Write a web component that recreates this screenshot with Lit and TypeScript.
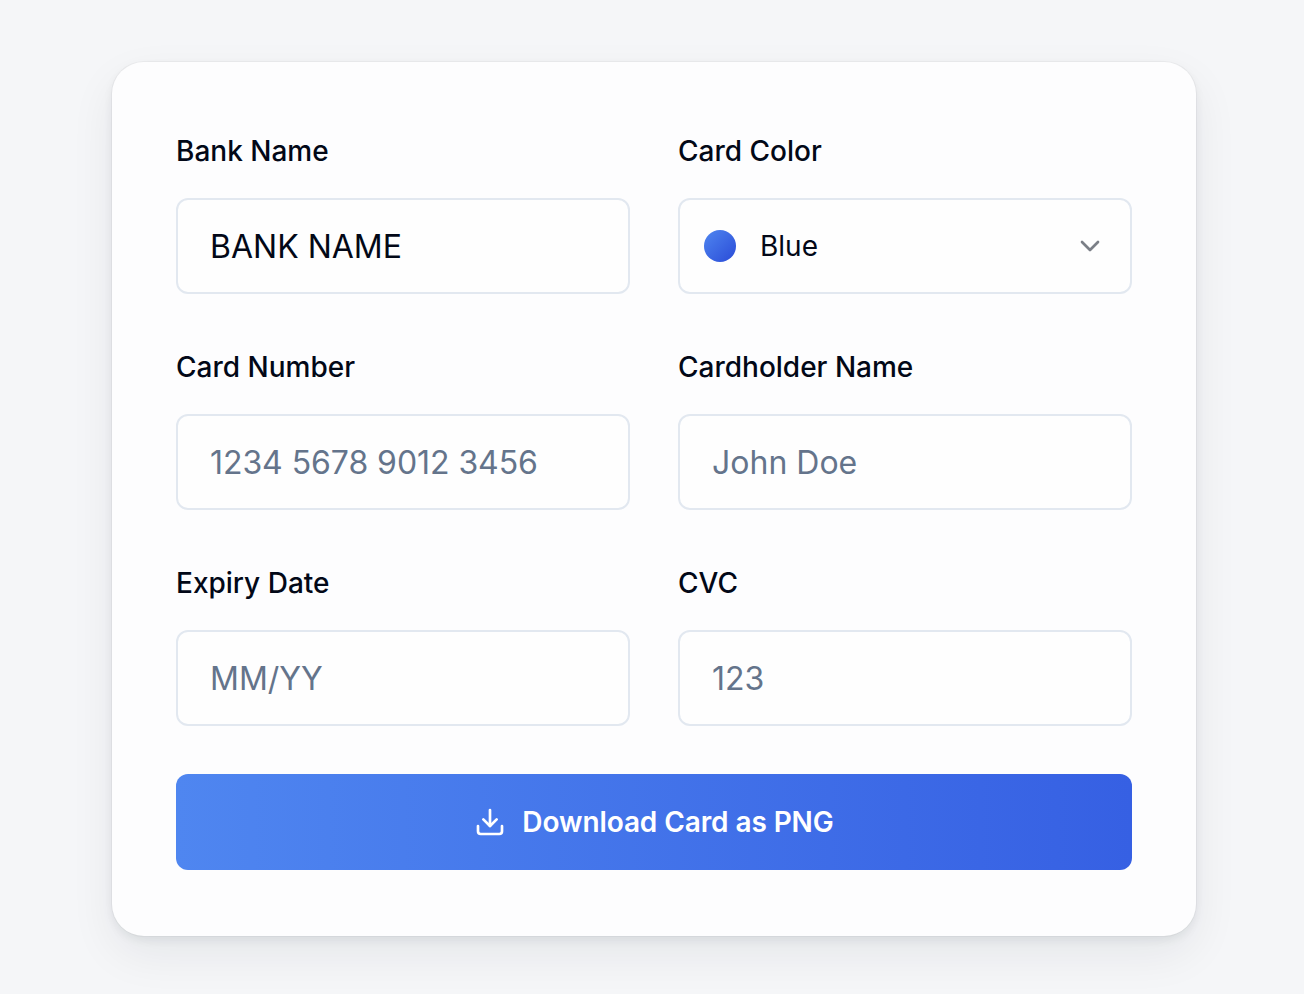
import { LitElement, html, css } from "lit";
import { customElement } from "lit/decorators.js";

@customElement("app-root")
export class AppRoot extends LitElement {
  static styles = css`
    :host {
      display: block;
      min-height: 994px;
      box-sizing: border-box;
      background: #f5f6f8;
      padding: 62px 108px 58px 112px;
      font-family: Inter, "Liberation Sans", sans-serif;
      color: #020817;
    }
    .card {
      background: #fdfdfe;
      border-radius: 32px;
      padding: 64px 64px 66px;
      box-shadow: 0 0 0 1px rgba(15, 23, 42, 0.035), 0 4px 10px rgba(15, 23, 42, 0.07), 0 18px 46px rgba(15, 23, 42, 0.07);
    }
    .grid {
      display: grid;
      grid-template-columns: 1fr 1fr;
      column-gap: 48px;
      row-gap: 48px;
    }
    .label {
      display: block;
      font-size: 28px;
      line-height: 50px;
      font-weight: 500;
      margin-bottom: 22px;
    }
    .box {
      height: 96px;
      box-sizing: border-box;
      border: 2px solid #e2e8f0;
      border-radius: 12px;
      background: #fefefe;
      display: flex;
      align-items: center;
      padding: 0 32px;
      font-size: 32px;
    }
    .ph { color: #64748b; }
    .num { letter-spacing: -0.06px; }
    .select { padding: 0 32px 0 24px; font-size: 28px; }
    .dot {
      width: 32px;
      height: 32px;
      border-radius: 50%;
      background: linear-gradient(135deg, #4f86f0, #2a4bd7);
      margin-right: 24px;
    }
    .value { flex: 1; }
    .chev { display: block; width: 32px; height: 32px; margin-right: -8px; }
    .btn {
      margin-top: 48px;
      height: 96px;
      border-radius: 12px;
      background: linear-gradient(90deg, #4f86f0, #3660e3);
      color: #fff;
      font-size: 28px;
      font-weight: 600;
      letter-spacing: -0.1px;
      display: flex;
      align-items: center;
      justify-content: center;
      gap: 16px;
    }
    .btn svg { display: block; width: 32px; height: 32px; }
  `;

  private field(label: string, content: unknown) {
    return html`<div><span class="label">${label}</span>${content}</div>`;
  }

  render() {
    return html`
      <div class="card">
        <div class="grid">
          ${this.field("Bank Name", html`<div class="box">BANK NAME</div>`)}
          ${this.field(
            "Card Color",
            html`<div class="box select">
              <span class="dot"></span><span class="value">Blue</span>
              <svg class="chev" viewBox="0 0 24 24" fill="none" stroke="#7b7f87" stroke-width="2" stroke-linecap="round" stroke-linejoin="round"><path d="m6 9 6 6 6-6"/></svg>
            </div>`
          )}
          ${this.field("Card Number", html`<div class="box ph num">1234 5678 9012 3456</div>`)}
          ${this.field("Cardholder Name", html`<div class="box ph">John Doe</div>`)}
          ${this.field("Expiry Date", html`<div class="box ph">MM/YY</div>`)}
          ${this.field("CVC", html`<div class="box ph">123</div>`)}
        </div>
        <div class="btn">
          <svg viewBox="0 0 24 24" fill="none" stroke="#fff" stroke-width="2" stroke-linecap="round" stroke-linejoin="round"><path d="M12 15V3"/><path d="M21 15v4a2 2 0 0 1-2 2H5a2 2 0 0 1-2-2v-4"/><path d="m7 10 5 5 5-5"/></svg>
          <span>Download Card as PNG</span>
        </div>
      </div>
    `;
  }
}
